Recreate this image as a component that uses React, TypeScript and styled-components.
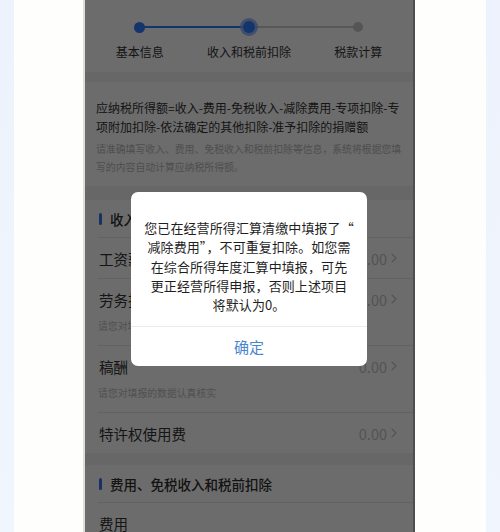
import React from "react";
import styled, { createGlobalStyle } from "styled-components";

const GlobalStyle = createGlobalStyle`
  html, body { margin: 0; padding: 0; }
  body {
    font-family: "Noto Sans CJK SC", "Noto Sans", sans-serif;
    background: #ffffff;
  }
  * { box-sizing: border-box; }
`;

const Page = styled.div`
  display: grid;
  grid-template-columns: 14px 69px 332px 71px 14px;
  width: 500px;
  height: 532px;
  overflow: hidden;
`;

const SideBand = styled.div`
  background: linear-gradient(180deg, #edf2fc 0%, #f1f5fd 100%);
`;

const Gutter = styled.div`
  background: #fefefc;
`;

const Phone = styled.div`
  position: relative;
  overflow: hidden;
  background: #ffffff;
  border-left: 2px solid #deded6;
  border-right: 2px solid #4f4f4f;
`;

/* ---------- steps ---------- */
const Steps = styled.div`
  display: grid;
  grid-template-columns: repeat(3, 1fr);
  height: 72px;
  padding-top: 20px;
`;

const Step = styled.div`
  display: flex;
  flex-direction: column;
  align-items: center;
`;

const Track = styled.div<{ $left?: string; $right?: string }>`
  position: relative;
  width: 100%;
  height: 14px;
  display: flex;
  align-items: center;
  justify-content: center;
  &::before,
  &::after {
    content: "";
    position: absolute;
    top: 6px;
    height: 2px;
  }
  &::before {
    left: 0;
    right: 50%;
    background: ${(p) => p.$left ?? "transparent"};
  }
  &::after {
    left: 50%;
    right: 0;
    background: ${(p) => p.$right ?? "transparent"};
  }
`;

const Dot = styled.span<{ $state: "done" | "active" | "todo" }>`
  position: relative;
  z-index: 1;
  border-radius: 50%;
  width: ${(p) => (p.$state === "active" ? 12 : p.$state === "done" ? 11 : 10)}px;
  height: ${(p) => (p.$state === "active" ? 12 : p.$state === "done" ? 11 : 10)}px;
  background: ${(p) => (p.$state === "todo" ? "#c9c9c9" : "#2f7bff")};
  box-shadow: ${(p) =>
    p.$state === "active" ? "0 0 0 3px rgba(130, 170, 255, 0.8)" : "none"};
`;

const StepLabel = styled.div`
  margin-top: 10px;
  font-size: 12px;
  line-height: 16px;
  color: #333333;
  white-space: nowrap;
`;

/* ---------- bands and sections ---------- */
const Band = styled.div<{ $h: number }>`
  height: ${(p) => p.$h}px;
  background: #f3f3f3;
`;

const Intro = styled.div`
  padding: 16px 6px 10px 11px;
`;

const Formula = styled.div`
  font-size: 12px;
  line-height: 19px;
  color: #333333;
  white-space: nowrap;
`;

const IntroHint = styled.div`
  margin-top: 4px;
  font-size: 9.85px;
  line-height: 18px;
  color: #b8b8b8;
  white-space: nowrap;
`;

const SectionHeader = styled.div<{ $h: number }>`
  height: ${(p) => p.$h}px;
  display: flex;
  align-items: center;
  padding-left: 14px;
  font-size: 13.5px;
  font-weight: 500;
  color: #2e2e2e;
  &::before {
    content: "";
    width: 3px;
    height: 12px;
    border-radius: 1.5px;
    background: #3d74e0;
    margin-right: 8px;
  }
`;

const RowBlock = styled.div<{ $pad: number }>`
  margin-left: 13px;
  padding-bottom: ${(p) => p.$pad}px;
  border-top: 1px solid #e8e8e8;
`;

const RowMain = styled.div`
  height: 40px;
  display: flex;
  align-items: center;
  justify-content: space-between;
  padding: 0 16px 0 1px;
`;

const RowLabel = styled.span`
  font-size: 14.5px;
  color: #333333;
`;

const RowValue = styled.span`
  display: flex;
  align-items: center;
  gap: 4px;
  font-size: 14.5px;
  color: #c4c4c4;
`;

const RowHint = styled.div`
  font-size: 9.85px;
  line-height: 14px;
  color: #bdbdbd;
`;

/* ---------- modal ---------- */
const Backdrop = styled.div`
  position: absolute;
  inset: 0;
  z-index: 10;
  background: rgba(0, 0, 0, 0.575);
  display: flex;
  justify-content: center;
  align-items: flex-start;
  padding-top: 192px;
`;

const Dialog = styled.div`
  width: 236px;
  background: #ffffff;
  border-radius: 7px;
  overflow: hidden;
`;

const Message = styled.div`
  padding: 26px 8px 12px;
  font-size: 13px;
  line-height: 19.3px;
  letter-spacing: 0.1px;
  text-align: center;
  color: #1f1f1f;
  white-space: nowrap;
`;

const DialogButton = styled.button`
  display: block;
  width: 100%;
  height: 40px;
  border: none;
  border-top: 1px solid #ebebeb;
  background: transparent;
  font-family: inherit;
  font-size: 15px;
  color: #4a86d0;
  padding: 0;
`;

const Chevron = () => (
  <svg width="6" height="10" viewBox="0 0 6 10" fill="none">
    <path d="M1 1l4 4-4 4" stroke="#c4c4c4" strokeWidth="1.1" strokeLinecap="round" strokeLinejoin="round" />
  </svg>
);

type Item = { label: string; hint?: string };

const Row = ({ label, hint }: Item) => (
  <RowBlock $pad={hint ? 12 : 0}>
    <RowMain>
      <RowLabel>{label}</RowLabel>
      <RowValue>
        0.00
        <Chevron />
      </RowValue>
    </RowMain>
    {hint && <RowHint>{hint}</RowHint>}
  </RowBlock>
);

const incomeItems: Item[] = [
  { label: "工资薪金" },
  { label: "劳务报酬", hint: "请您对填报的数据认真核实" },
  { label: "稿酬", hint: "请您对填报的数据认真核实" },
  { label: "特许权使用费" },
];

export default function App() {
  return (
    <>
      <GlobalStyle />
      <Page>
        <SideBand />
        <Gutter />
        <Phone>
          <Steps>
            <Step>
              <Track $right="#2f7bff">
                <Dot $state="done" />
              </Track>
              <StepLabel>基本信息</StepLabel>
            </Step>
            <Step>
              <Track $left="#2f7bff" $right="#cfcfcf">
                <Dot $state="active" />
              </Track>
              <StepLabel>收入和税前扣除</StepLabel>
            </Step>
            <Step>
              <Track $left="#cfcfcf">
                <Dot $state="todo" />
              </Track>
              <StepLabel>税款计算</StepLabel>
            </Step>
          </Steps>
          <Band $h={10} />
          <Intro>
            <Formula>
              应纳税所得额=收入-费用-免税收入-减除费用-专项扣除-专
              <br />
              项附加扣除-依法确定的其他扣除-准予扣除的捐赠额
            </Formula>
            <IntroHint>
              请准确填写收入、费用、免税收入和税前扣除等信息，系统将根据您填
              <br />
              写的内容自动计算应纳税所得额。
            </IntroHint>
          </Intro>
          <Band $h={14} />
          <SectionHeader $h={37}>收入</SectionHeader>
          {incomeItems.map((it) => (
            <Row key={it.label} {...it} />
          ))}
          <Band $h={12} />
          <SectionHeader $h={37}>费用、免税收入和税前扣除</SectionHeader>
          <RowBlock $pad={0}>
            <RowMain>
              <RowLabel>费用</RowLabel>
            </RowMain>
          </RowBlock>
          <Backdrop>
            <Dialog>
              <Message>
                您已在经营所得汇算清缴中填报了“
                <br />
                减除费用”，不可重复扣除。如您需
                <br />
                在综合所得年度汇算中填报，可先
                <br />
                更正经营所得申报，否则上述项目
                <br />
                将默认为0。
              </Message>
              <DialogButton>确定</DialogButton>
            </Dialog>
          </Backdrop>
        </Phone>
        <Gutter />
        <SideBand />
      </Page>
    </>
  );
}
